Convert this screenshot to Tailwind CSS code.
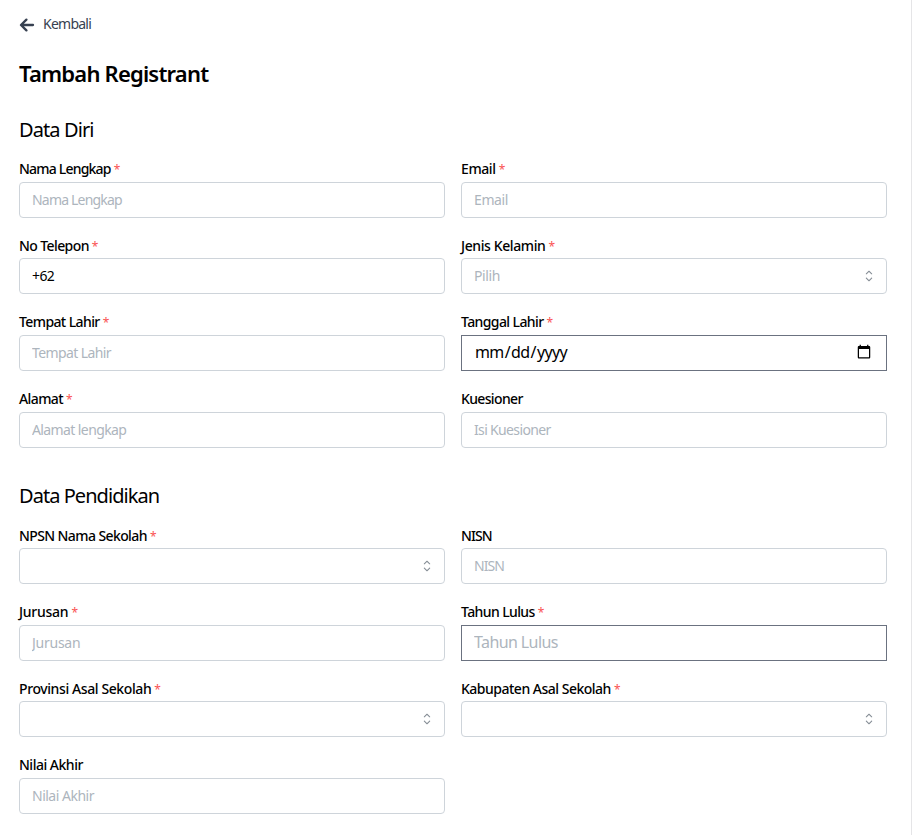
<!DOCTYPE html>
<html lang="id">
<head>
  <meta charset="UTF-8" />
  <meta name="viewport" content="width=device-width, initial-scale=1.0" />
  <title>Tambah Registrant</title>
  <script src="https://cdn.jsdelivr.net/npm/@tailwindcss/browser@4"></script>
</head>
<body class="bg-white text-black font-['Noto_Sans',sans-serif] overflow-hidden">
  <main class="w-[912px] h-screen border-r border-[#e5e5e7] pl-[19px] pr-6 pt-3.5 overflow-hidden">
    <a href="#" class="flex items-center gap-2 h-5 text-sm tracking-[-0.75px] text-[#374151]">
      <svg class="w-4 h-4" viewBox="0 0 16 16" fill="none" stroke="currentColor" stroke-width="2.3" stroke-linecap="round" stroke-linejoin="round">
        <path d="M14 9H2.2M7.4 3.6L2 9l5.4 5.4" />
      </svg>
      Kembali
    </a>

    <h1 class="mt-[23px] h-8 leading-8 text-[22px] font-semibold tracking-[-0.8px]">Tambah Registrant</h1>

    <!-- Data Diri -->
    <h2 class="mt-[25px] h-8 leading-8 text-xl tracking-[-0.9px]">Data Diri</h2>
    <div class="mt-[14.1px] grid grid-cols-[426px_426px] gap-x-4 gap-y-[18.9px]" id="dataDiri"></div>

    <!-- Data Pendidikan -->
    <h2 class="mt-8 h-8 leading-8 text-xl tracking-[-0.95px]">Data Pendidikan</h2>
    <div class="mt-[15px] grid grid-cols-[426px_426px] gap-x-4 gap-y-[18.9px]" id="dataPendidikan"></div>
  </main>

  <script>
    const inputClass = 'block w-full h-9 px-3 pb-px text-sm border border-[#ced4da] rounded placeholder:text-[#adb5bd] outline-none bg-white';
    const plainClass = 'block w-full h-9 px-3 pb-px text-base border border-[#6b7280] placeholder:text-[#adb5bd] outline-none bg-white';

    const dataDiri = [
      { label: 'Nama Lengkap', required: true, placeholder: 'Nama Lengkap', tracking: 'tracking-[-0.8px]' },
      { label: 'Email', required: true, placeholder: 'Email' },
      { label: 'No Telepon', required: true, value: '+62', tracking: 'tracking-[-0.6px]' },
      { label: 'Jenis Kelamin', required: true, placeholder: 'Pilih', select: true },
      { label: 'Tempat Lahir', required: true, placeholder: 'Tempat Lahir', tracking: 'tracking-[-0.6px]' },
      { label: 'Tanggal Lahir', required: true, type: 'date', plain: true, tracking: 'tracking-[-0.6px]' },
      { label: 'Alamat', required: true, placeholder: 'Alamat lengkap', tracking: 'tracking-[-0.6px]' },
      { label: 'Kuesioner', placeholder: 'Isi Kuesioner', tracking: 'tracking-[-0.65px]' },
    ];

    const dataPendidikan = [
      { label: 'NPSN Nama Sekolah', required: true, select: true, tracking: 'tracking-[-0.6px]' },
      { label: 'NISN', placeholder: 'NISN', tracking: 'tracking-[-0.9px]' },
      { label: 'Jurusan', required: true, placeholder: 'Jurusan', tracking: 'tracking-[-0.25px]' },
      { label: 'Tahun Lulus', required: true, placeholder: 'Tahun Lulus', plain: true, tracking: 'tracking-[-0.6px]' },
      { label: 'Provinsi Asal Sekolah', required: true, select: true },
      { label: 'Kabupaten Asal Sekolah', required: true, select: true, tracking: 'tracking-[-0.5px]' },
      { label: 'Nilai Akhir', placeholder: 'Nilai Akhir', tracking: 'tracking-[-0.5px]' },
    ];

    // Render the fields of one section
    function renderFields(id, fields) {
      document.getElementById(id).innerHTML = fields.map(f => `
        <div class="${f.tracking || 'tracking-[-0.4px]'}">
          <label class="flex gap-[3px] h-[21.7px] leading-[18px] text-sm font-medium">${f.label}${f.required ? '<span class="text-xs leading-5 font-normal text-[#fa5252]">*</span>' : ''}</label>
          <div class="relative">
            <input type="${f.type || 'text'}" value="${f.value || ''}" placeholder="${f.placeholder || ''}" class="${f.plain ? plainClass : inputClass}" />
            ${f.select ? `
            <svg class="absolute right-[9px] top-[9px] w-[18px] h-[18px] text-[#868e96]" viewBox="0 0 15 15" fill="currentColor">
              <path fill-rule="evenodd" clip-rule="evenodd" d="M4.93179 5.43179C4.75605 5.60753 4.75605 5.89245 4.93179 6.06819C5.10753 6.24392 5.39245 6.24392 5.56819 6.06819L7.49999 4.13638L9.43179 6.06819C9.60753 6.24392 9.89245 6.24392 10.0682 6.06819C10.2439 5.89245 10.2439 5.60753 10.0682 5.43179L7.81819 3.18179C7.73379 3.0974 7.61933 3.04999 7.49999 3.04999C7.38064 3.04999 7.26618 3.0974 7.18179 3.18179L4.93179 5.43179ZM10.0682 9.56819C10.2439 9.39245 10.2439 9.10753 10.0682 8.93179C9.89245 8.75606 9.60753 8.75606 9.43179 8.93179L7.49999 10.8636L5.56819 8.93179C5.39245 8.75606 5.10753 8.75606 4.93179 8.93179C4.75605 9.10753 4.75605 9.39245 4.93179 9.56819L7.18179 11.8182C7.35753 11.9939 7.64245 11.9939 7.81819 11.8182L10.0682 9.56819Z" />
            </svg>` : ''}
          </div>
        </div>`).join('');
    }

    renderFields('dataDiri', dataDiri);
    renderFields('dataPendidikan', dataPendidikan);
  </script>
</body>
</html>
